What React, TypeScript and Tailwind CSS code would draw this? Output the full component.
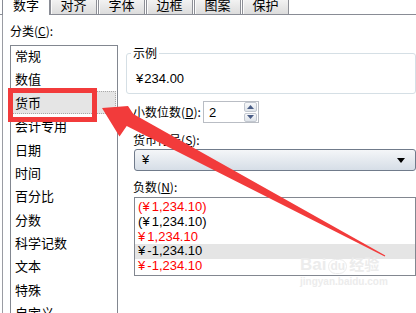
const categories = ["常规", "数值", "货币", "会计专用", "日期", "时间", "百分比", "分数", "科学记数", "文本", "特殊", "自定义"];

const negatives = [
  { pre: "(", amount: "1,234.10)", red: true },
  { pre: "(", amount: "1,234.10)", red: false },
  { pre: "", amount: "1,234.10", red: true },
  { pre: "", amount: "-1,234.10", red: false, selected: true },
  { pre: "", amount: "-1,234.10", red: true },
];

const tabs = ["对齐", "字体", "边框", "图案", "保护"];

function Spinner() {
  return (
    <div className="flex h-[22px] w-[56px] items-center border border-[#b9bdc4] bg-white pl-[5px] pr-[1px]">
      <span className="flex-1 font-['Liberation_Sans'] text-[13px] leading-none">2</span>
      <div className="flex h-[20px] w-[13px] flex-col gap-[1px]">
        <div className="flex flex-1 items-center justify-center rounded-[2px] border border-[#c3c8d0] bg-linear-to-b from-[#f7f8fa] to-[#dfe4ea]">
          <svg width="7" height="4" viewBox="0 0 7 4">
            <path d="M0 4 L3.5 0 L7 4 Z" fill="#4a5d86" />
          </svg>
        </div>
        <div className="flex flex-1 items-center justify-center rounded-[2px] border border-[#c3c8d0] bg-linear-to-b from-[#f7f8fa] to-[#dfe4ea]">
          <svg width="7" height="4" viewBox="0 0 7 4">
            <path d="M0 0 L3.5 4 L7 0 Z" fill="#4a5d86" />
          </svg>
        </div>
      </div>
    </div>
  );
}

export default function App() {
  return (
    <div className="relative h-[313px] w-[416px] overflow-hidden bg-white font-['Noto_Sans_CJK_SC',sans-serif] text-[12px] text-black">
      {/* tab strip, tops cut off by the window */}
      <div className="flex h-[15px] items-end border-b border-[#898c95] pl-[2px]">
        <div className="-mb-px flex h-[15px] w-[48px] items-end justify-center border-x border-[#898c95] bg-white pb-[4px] text-[13px] leading-none">
          数字
        </div>
        <div className="flex gap-[1px]">
          {tabs.map((t) => (
            <div
              key={t}
              className="flex h-[14px] w-[47px] items-end justify-center border-x border-[#8d8f96] bg-linear-to-b from-[#f2f2f2] to-[#dcdcdc] pb-[3px] text-[13px] leading-none shadow-[inset_1px_0_0_#fbfbfb]"
            >
              {t}
            </div>
          ))}
        </div>
      </div>

      <div className="ml-[2px] flex h-[298px] border-l border-[#9a9ca3]">
        {/* category column */}
        <div className="flex w-[117px] flex-col pl-[7px]">
          <div className="mt-[8px] leading-[16px]">
            分类(<span className="underline">C</span>):
          </div>
          <div className="mt-[6px] flex-1 border border-b-0 border-[#828790] pt-[-2px]">
            <div className="-mt-[2px]">
              {categories.map((c) => (
                <div
                  key={c}
                  className={
                    c === "货币"
                      ? "mx-[1px] flex h-[23.4px] items-center border border-dotted border-[#a9a9a9] bg-[#e5e5e5] pl-[2px] text-[13px]"
                      : "flex h-[23.4px] items-center pl-[4px] text-[13px]"
                  }
                >
                  {c}
                </div>
              ))}
            </div>
          </div>
        </div>

        {/* options column */}
        <div className="ml-[8px] flex w-[295px] flex-col">
          <fieldset className="mt-[31px] h-[48px] rounded-[3px] border border-[#d5dfe5]">
            <legend className="ml-[4px] px-[2px] leading-[14px]">示例</legend>
            <div className="mt-[11px] pl-[9px] font-['Liberation_Sans','Noto_Sans_CJK_SC',sans-serif] text-[13px] leading-[15px]">
              <span className="mr-[1px]">¥</span>234.00
            </div>
          </fieldset>

          <div className="mt-[7px] flex h-[22px] items-center pl-[7px]">
            <div className="w-[70px] leading-[16px]">
              小数位数(<span className="underline">D</span>):
            </div>
            <Spinner />
          </div>

          <div className="mt-[9px] pl-[7px] leading-[16px]">
            货币符号(<span className="underline">S</span>):
          </div>
          <div className="ml-[8px] mt-[1px] flex h-[22px] items-center justify-between rounded-[3px] border border-[#707b8b] bg-linear-to-b from-[#f4f6f8] to-[#d6dee7] pl-[7px] pr-[10px]">
            <span className="font-['Liberation_Sans','Noto_Sans_CJK_SC',sans-serif] text-[13px]">¥</span>
            <svg width="8" height="5" viewBox="0 0 8 5">
              <path d="M0 0 L8 0 L4 5 Z" fill="#000" />
            </svg>
          </div>

          <div className="mt-[8px] pl-[7px] leading-[16px]">
            负数(<span className="underline">N</span>):
          </div>
          <div className="ml-[8px] mt-[2px] h-[79px] border border-[#828790] pt-[1.6px] font-['Liberation_Sans','Noto_Sans_CJK_SC',sans-serif] text-[13px]">
            {negatives.map((n, i) => (
              <div
                key={i}
                className={`flex h-[14.75px] items-center pl-[3px] ${n.selected ? "bg-[#e5e5e5]" : ""} ${n.red ? "text-[#ff0000]" : "text-black"}`}
              >
                {n.pre}
                <span className="mr-[2px]">¥</span>
                {n.amount}
              </div>
            ))}
          </div>
        </div>
      </div>

      {/* watermark */}
      <div className="pointer-events-none absolute left-[300px] top-[256px] flex flex-col items-start text-[#ececec]">
        <div className="flex items-end gap-[2px] font-['Liberation_Sans','Noto_Sans_CJK_SC',sans-serif] text-[17px] font-bold leading-[18px]">
          <span>Bai</span>
          <span className="rounded-full border border-[#ececec] px-[1px] text-[12px] leading-[13px]">du</span>
          <span className="text-[15px]">经验</span>
        </div>
        <div className="mt-[3px] font-['Liberation_Sans',sans-serif] text-[10px] font-bold leading-[10px]">jingyan.baidu.com</div>
      </div>

      {/* red annotation overlay */}
      <div className="pointer-events-none absolute left-[8px] top-[88px] h-[34px] w-[89px] border-[5px] border-[#f23b3b]" />
      <svg className="pointer-events-none absolute left-0 top-0" width="416" height="313" viewBox="0 0 416 313">
        <polygon
          points="102,108 128,106 133.3,113.9 385.3,255.5 384.7,256.5 126.7,126.1 119.5,136.5"
          fill="#f23b3b"
        />
      </svg>
    </div>
  );
}
